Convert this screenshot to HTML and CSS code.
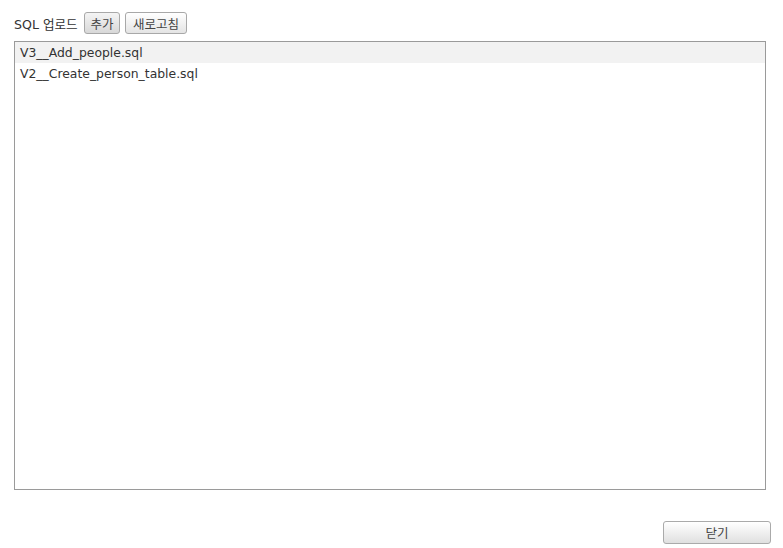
FILE: index.html
```html
<!DOCTYPE html>
<html lang="ko">
<head>
<meta charset="utf-8">
<link rel="stylesheet" href="styles.css">
</head>
<body>
<div class="dialog">
  <div class="toolbar">
    <span class="label">SQL 업로드</span>
    <button class="btn btn-add">추가</button>
    <button class="btn btn-refresh">새로고침</button>
  </div>
  <div class="list">
    <div class="row selected">V3__Add_people.sql</div>
    <div class="row">V2__Create_person_table.sql</div>
  </div>
  <div class="footer">
    <button class="btn btn-close">닫기</button>
  </div>
</div>
</body>
</html>
```
FILE: styles.css
```css
html, body {
  margin: 0;
  padding: 0;
  background: #ffffff;
}
body {
  font-family: "DejaVu Sans", "Noto Sans CJK KR", sans-serif;
  font-size: 12.4px;
  color: #333333;
}
.dialog {
  width: 783px;
  height: 548px;
  box-sizing: border-box;
  padding: 12px 13px 0 14px;
  display: flex;
  flex-direction: column;
}
.toolbar {
  display: flex;
  align-items: center;
  height: 22px;
}
.label {
  width: 70px;
  font-size: 12.6px;
  white-space: nowrap;
}
.btn {
  font-family: "DejaVu Sans", "Noto Sans CJK KR", sans-serif;
  font-size: 12.5px;
  color: #444444;
  height: 22px;
  padding: 0;
  border: 1px solid #a8a8a8;
  border-radius: 3px;
  background: linear-gradient(#ffffff, #e4e4e4);
  box-sizing: border-box;
  margin: 0;
}
.btn-add {
  width: 36px;
  background: linear-gradient(#f4f4f4, #d8d8d8);
}
.btn-refresh {
  width: 62px;
  margin-left: 5px;
}
.list {
  margin-top: 7px;
  width: 752px;
  height: 449px;
  box-sizing: border-box;
  border: 1px solid #9a9a9a;
  display: flex;
  flex-direction: column;
}
.row {
  height: 21px;
  line-height: 21px;
  padding-left: 5px;
}
.selected {
  background: #f2f2f2;
}
.footer {
  display: flex;
  justify-content: flex-end;
  margin-top: 31px;
  margin-right: -1px;
}
.btn-close {
  width: 108px;
  height: 23px;
  border-color: #aaaaaa;
  background: linear-gradient(#ffffff, #e0e0e0);
}
```
